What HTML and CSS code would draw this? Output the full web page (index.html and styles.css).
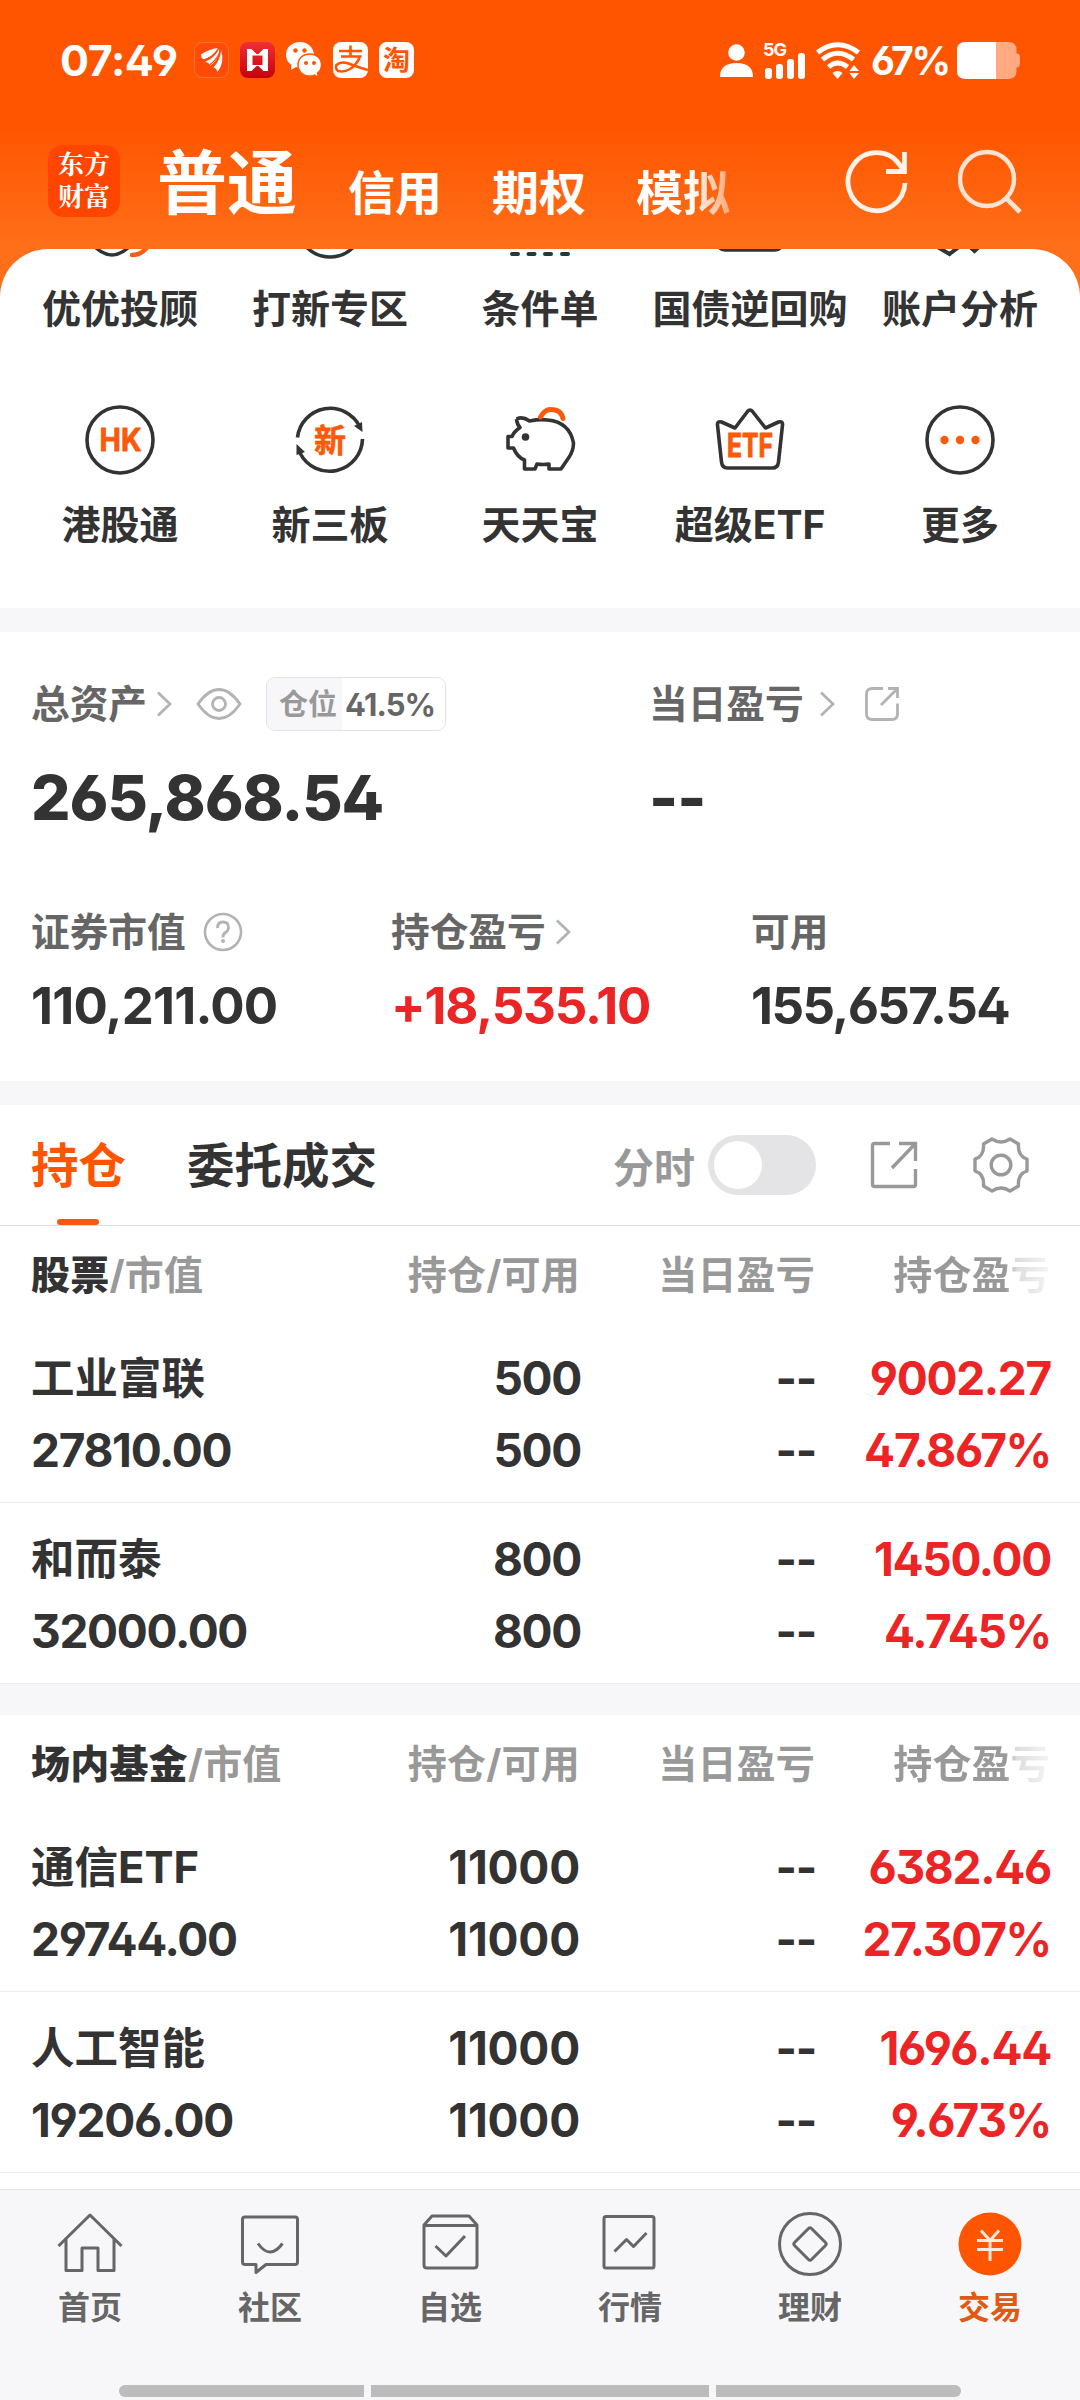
FILE: index.html
```html
<!DOCTYPE html>
<html lang="zh-CN">
<head>
<meta charset="utf-8">
<title>交易</title>
<link rel="stylesheet" href="styles.css">
</head>
<body>
<div class="app">
  <header class="top">
    <div class="status">
      <span class="clock">07:49</span>
      <div class="notif">
        <svg width="35" height="36" viewBox="0 0 35 36"><rect x=".5" y=".5" width="34" height="35" rx="8" fill="#ff4a08" stroke="#ff7433"/><path d="M7 12.500Q15 7 24 6q-3 8-14 11.500Q7 16 7 12.500z" fill="#fff"/><path d="M11 20Q22 15 25 6.500q2 9-9 17.500-1-4-5-4z" fill="#fff"/><path d="M23.500 30q-1-4-4-4.500Q27 17 27 8q4 12-3.500 22z" fill="#fff"/><path d="M9 18.500Q21 14 24.500 6M15 23.500Q25 16 26.500 7" fill="none" stroke="#ff4a08" stroke-width="1.200"/></svg>
        <svg width="35" height="36" viewBox="0 0 35 36"><defs><linearGradient id="r" x2="0" y2="1"><stop stop-color="#ee3038"/><stop offset="1" stop-color="#c8000c"/></linearGradient></defs><rect width="35" height="36" rx="8" fill="url(#r)"/><path d="M7 7h4.500l5 5h2l5-5H28v22h-4.500l-5-5h-2l-5 5H7zM12.500 13.500v9.500h10V13.500z" fill="#fff" fill-rule="evenodd"/></svg>
        <svg width="36" height="36" viewBox="0 0 36 36"><path d="M14 0C6 0 0 5.500 0 13q0 6 5.500 10L5 28l5-3q2 .8 5 .8C22 26 28 20 28 13S22 0 14 0" fill="#fff"/><path d="M24 12c-7 0-12 4.500-12 11s5 11 12 11q3 0 4.500-1l4 3-1-5q4-3 4-8c0-6.500-5-11-11.500-11" fill="#fff" stroke="#ff5500" stroke-width="1.500"/><g fill="#ff5500"><circle cx="9.500" cy="8.500" r="2.200"/><circle cx="18.500" cy="8.500" r="2.200"/><circle cx="20" cy="21" r="2"/><circle cx="28" cy="21" r="2"/></g></svg>
        <svg width="35" height="36" viewBox="0 0 35 36"><rect width="35" height="36" rx="8" fill="#fff"/><path d="M6 9h23M17.500 3.500v11M8 14.500h19q-3 8-10 12.500-6 3.500-12 2-3-2-1.500-6 4-4 12-1.500 10 4 19.500 6.500" fill="none" stroke="#ff5500" stroke-width="2.600"/></svg>
        <svg width="35" height="36" viewBox="0 0 35 36"><rect width="35" height="36" rx="8" fill="#fff"/><text x="17.500" y="28" class="cjk" font-size="27" text-anchor="middle" fill="#ff5500">淘</text></svg>
      </div>
      <div class="sys">
        <svg width="33" height="36" viewBox="0 0 33 36"><circle cx="16.500" cy="10.500" r="8.300" fill="#fff"/><path d="M0 35q0-14 16.500-14T33 35z" fill="#fff"/></svg>
        <svg class="signal" width="43" height="43" viewBox="0 -6 43 43"><text x="0" y="14" font-size="18" font-weight="700" textLength="24" fill="#fff">5G</text><g fill="#fff"><rect x="2" y="26" width="7" height="11" rx="3"/><rect x="13" y="22" width="7" height="15" rx="3"/><rect x="24" y="17" width="7" height="20" rx="3"/><rect x="35" y="11" width="7" height="26" rx="3"/></g></svg>
        <svg width="44" height="37" viewBox="0 0 44 37"><g fill="none" stroke="#fff" stroke-width="5"><path d="M1.500 10.500Q21.500-5 42.500 10.500M6.500 17.500Q21.500 5 37.500 17.500M12.500 25Q21.500 17 31.500 25"/></g><path d="M16.500 31q5-4 10 0l-5 6z M38 23l5 6H33.500zM38 37l5-6H33.500z" fill="#fff"/></svg>
        <span class="pct">67%</span>
        <svg width="64" height="37" viewBox="0 0 64 37"><path d="M39 0h12q8.500 0 8.500 8v3.500q3.500 0 3.500 4v6q0 4-3.500 4V29q0 8-8.500 8H39z" fill="#ffaa80"/><path d="M39 0H9Q0 0 0 8v21q0 8 9 8h30z" fill="#fff"/></svg>
      </div>
    </div>
    <nav class="accounts">
      <div class="logo"><span>东方</span><span>财富</span></div>
      <span class="acc on">普通</span>
      <span class="acc">信用</span>
      <span class="acc">期权</span>
      <span class="acc fade">模拟</span>
      <div class="actions">
        <svg width="64" height="66" viewBox="0 0 64 66"><path d="M60 34a28.500 29 0 1 1-5.500-18.500L59 22M59.500 3v19.500H41" fill="none" stroke="#fff2e8" stroke-width="4.800"/></svg>
        <svg width="64" height="66" viewBox="0 0 64 66"><circle cx="29" cy="30" r="27" fill="none" stroke="#ffe3d2" stroke-width="4.500"/><path d="M48 49l14 14" stroke="#ffe3d2" stroke-width="4.800"/></svg>
      </div>
    </nav>
  </header>

  <section class="shortcuts">
    <div class="cell"><svg class="peek" viewBox="84 249 72 12"><path d="M94 246q18 18 36 0" fill="none" stroke="#333" stroke-width="3.500"/><path d="M132 255q10 0 16-9" fill="none" stroke="#f26010" stroke-width="4.500" stroke-linecap="round"/></svg><b>优优投顾</b></div>
    <div class="cell"><svg class="peek" viewBox="294 249 72 12"><circle cx="330" cy="224" r="33" fill="none" stroke="#333" stroke-width="3.500"/></svg><b>打新专区</b></div>
    <div class="cell"><svg class="peek" viewBox="504 249 72 12"><path d="M512 254h6M528.500 254h6M545 254h6M562 254h6" stroke="#333" stroke-width="4" stroke-linecap="round"/></svg><b>条件单</b></div>
    <div class="cell"><svg class="peek" viewBox="714 249 72 12"><rect x="717" y="200" width="66" height="50" rx="8" fill="none" stroke="#333" stroke-width="3.500"/></svg><b>国债逆回购</b></div>
    <div class="cell"><svg class="peek" viewBox="924 249 72 12"><path d="M934 245l15.500 9 12-9M968 245l6.500 6 6.500-6" fill="none" stroke="#333" stroke-width="4"/></svg><b>账户分析</b></div>
    <div class="cell"><svg class="ico" viewBox="0 0 72 72"><circle cx="36" cy="36" r="33" fill="none" stroke="#333" stroke-width="3.600"/><text x="15.500" y="47" font-size="31" font-weight="700" textLength="42" lengthAdjust="spacingAndGlyphs" fill="#fa5a0a" stroke="#fa5a0a" stroke-width=".8" stroke-linejoin="round">HK</text></svg><b>港股通</b></div>
    <div class="cell"><svg class="ico" viewBox="0 0 72 72"><path d="M3.500 33.500A33 33 0 0 1 66 23M68.500 35A33 33 0 0 1 6 49" fill="none" stroke="#333" stroke-width="3.600"/><path d="M60 22l8-4 .5 10zM2.500 51V40l8.500 8z" fill="#333"/><text x="36" y="47.500" class="cjk" font-size="32" text-anchor="middle" fill="#fa5a0a" stroke="#fa5a0a" stroke-width=".6">新</text></svg><b>新三板</b></div>
    <div class="cell"><svg class="ico" viewBox="0 0 72 72"><path d="M12.500 15q6-3 13 2 10-2 18-1 22 2 26 23 0 8-5 15l-7.500 11H45v-5q-6 1-12 0l-2 5H20.500v-9Q13 53 9.500 44H4V32.500h4q2-5 8-9-3-3-3.500-8.500" fill="none" stroke="#333" stroke-width="3.600" stroke-linejoin="round"/><circle cx="21.500" cy="33" r="3.800" fill="#333"/><path d="M36.500 13Q41 5 47 5.500q10 0 12 9" fill="none" stroke="#fa5a0a" stroke-width="5" stroke-linecap="round"/></svg><b>天天宝</b></div>
    <div class="cell"><svg class="ico" viewBox="0 0 72 72"><path d="M21 24L33.500 7.500q2.500-3 5 0L51.500 24l13-6q4.500-1 4 3L64.500 58q-.7 6-6 6h-45q-5.300 0-6-6L3.500 21q-.5-4 4-3z" fill="none" stroke="#333" stroke-width="3.600" stroke-linejoin="round"/><text x="13" y="53" font-size="32" font-weight="700" textLength="46" lengthAdjust="spacingAndGlyphs" fill="#fa5a0a" stroke="#fa5a0a" stroke-width="1" stroke-linejoin="round">ETF</text></svg><b>超级ETF</b></div>
    <div class="cell"><svg class="ico" viewBox="0 0 72 72"><circle cx="36" cy="36" r="33" fill="none" stroke="#333" stroke-width="3.600"/><g fill="#fa5a0a"><circle cx="20.500" cy="36" r="4.200"/><circle cx="36" cy="36" r="4.200"/><circle cx="51.500" cy="36" r="4.200"/></g></svg><b>更多</b></div>
  </section>

  <section class="assets">
    <div class="two">
      <div>
        <div class="lab">总资产<svg class="chev c1" viewBox="0 0 16 26"><path d="M2 1.500L14 13 2 24.500"/></svg><svg class="eye" width="46" height="32" viewBox="0 0 46 32"><g fill="none" stroke="#b3b3b3" stroke-width="2.800"><path d="M2 16Q12 1.500 23 1.500T44 16Q34 30.500 23 30.500T2 16z"/><circle cx="23" cy="16" r="6.500"/></g></svg><span class="badge"><i>仓位</i><em>41.5%</em></span></div>
        <div class="big">265,868.54</div>
      </div>
      <div>
        <div class="lab">当日盈亏<svg class="chev c2" viewBox="0 0 16 26"><path d="M2 1.500L14 13 2 24.500"/></svg><svg class="share" width="34" height="34" viewBox="0 0 34 34"><path d="M18 1.500H7Q1.500 1.500 1.500 7v20q0 5.500 5.500 5.500h20q5.500 0 5.500-5.500V16.500M23 1.500h9.500V11M32.500 1.500L16 18" fill="none" stroke="#b3b3b3" stroke-width="2.800"/></svg></div>
        <div class="big dash">--</div>
      </div>
    </div>
    <div class="three">
      <div><div class="lab">证券市值<svg class="help" width="40" height="40" viewBox="0 0 40 40"><circle cx="20" cy="20" r="18" fill="none" stroke="#b3b3b3" stroke-width="2.600"/><path d="M14.500 16q0-6 5.500-6t5.500 5.500q0 3-3 5t-2.500 5" fill="none" stroke="#b3b3b3" stroke-width="2.800"/><circle cx="20" cy="29" r="2" fill="#b3b3b3"/></svg></div><div class="num n1">110,211.00</div></div>
      <div><div class="lab">持仓盈亏<svg class="chev c3" viewBox="0 0 16 26"><path d="M2 1.500L14 13 2 24.500"/></svg></div><div class="num red">+18,535.10</div></div>
      <div><div class="lab">可用</div><div class="num n3">155,657.54</div></div>
    </div>
  </section>

  <section class="holdings">
    <div class="tabs">
      <span class="tab on">持仓</span>
      <span class="tab">委托成交</span>
      <span class="mode">分时</span>
      <span class="toggle"></span>
      <svg class="t-share" width="48" height="48" viewBox="0 0 48 48"><path d="M20 2.500H4.500Q2.500 2.500 2.500 4.500v39q0 2 2 2h39q2 0 2-2V28M29 2.500h16.500V20M45 3L22 27" fill="none" stroke="#999" stroke-width="3.400"/></svg>
      <svg width="56" height="56" viewBox="0 0 56 56"><g fill="none" stroke="#999" stroke-width="3.400"><path d="M19 2q9 6 18 0l8.500 5q-1 12 8.500 15v12q-9.500 3-8.500 15L37 54q-9-6-18 0l-8.500-5Q11.500 37 2 34V22Q11.500 19 10.500 7z" stroke-linejoin="round"/><circle cx="28" cy="28" r="9.800"/></g></svg>
    </div>

    <div class="group">
      <div class="row head"><span><b>股票</b>/市值</span><span>持仓/可用</span><span>当日盈亏</span><span class="cut">持仓盈亏</span></div>
      <div class="row"><span class="name">工业富联</span><span>500</span><span>--</span><span class="red">9002.27</span><span>27810.00</span><span>500</span><span>--</span><span class="red">47.867%</span></div>
      <div class="row"><span class="name">和而泰</span><span>800</span><span>--</span><span class="red">1450.00</span><span>32000.00</span><span>800</span><span>--</span><span class="red">4.745%</span></div>
    </div>
    <div class="group">
      <div class="row head"><span><b>场内基金</b>/市值</span><span>持仓/可用</span><span>当日盈亏</span><span class="cut">持仓盈亏</span></div>
      <div class="row"><span class="name">通信ETF</span><span class="loose">11000</span><span>--</span><span class="red">6382.46</span><span>29744.00</span><span class="loose">11000</span><span>--</span><span class="red">27.307%</span></div>
      <div class="row"><span class="name">人工智能</span><span class="loose">11000</span><span>--</span><span class="red">1696.44</span><span>19206.00</span><span class="loose">11000</span><span>--</span><span class="red">9.673%</span></div>
    </div>
  </section>

  <footer class="bottom">
    <nav class="menu">
      <div class="item"><svg viewBox="0 0 68 68"><path d="M2.500 36L34 5l31.500 31M10 29v31.500h16V38h16v22.500h16V29"/></svg><span>首页</span></div>
      <div class="item"><svg viewBox="0 0 68 68"><path d="M9 7h50q2.500 0 2.500 2.500v42.500q0 2.500-2.500 2.500H30l-10 8v-8H9q-2.500 0-2.500-2.500V9.500Q6.500 7 9 7zM22 33.500q12 17 24.500 0"/></svg><span>社区</span></div>
      <div class="item"><svg viewBox="0 0 68 68"><path d="M8 15l8-9h37l8 9v40q0 3-3 3H11q-3 0-3-3zM8 15.500h53M19.500 36l10.500 10 19-20"/></svg><span>自选</span></div>
      <div class="item"><svg viewBox="0 0 68 68"><path d="M10 6.500h46q2 0 2 2V56q0 2-2 2H10q-2 0-2-2V8.500q0-2 2-2zM18.500 41.500l12-12 7 7 13-13.500"/></svg><span>行情</span></div>
      <div class="item"><svg viewBox="0 0 68 68"><circle cx="34" cy="34" r="30.500"/><path d="M35.500 18.500l14 14q1.500 1.500 0 3l-14 14q-1.500 1.500-3 0l-14-14q-1.500-1.500 0-3l14-14q1.500-1.500 3 0"/></svg><span>理财</span></div>
      <div class="item on"><svg viewBox="0 0 68 68"><circle cx="34" cy="34" r="31.500" fill="#ff5500" stroke="none"/><path d="M25 20.500l9 10 9-10M34 30v21M21 30.500h26M21 39.500h26" stroke="#ffeadd"/></svg><span>交易</span></div>
    </nav>
    <div class="bar"><i class="s"></i><i class="m"></i><i class="s"></i></div>
  </footer>
</div>
</body>
</html>
```
FILE: styles.css
```css
* { box-sizing: border-box; }
body {
  margin: 0;
  font-family: Inter, "Noto Sans CJK SC", sans-serif;
  font-feature-settings: "ss01", "cv03", "cv04";
  color: #333;
  background: #fff;
}
svg { display: block; flex: none; }
.cjk { font-family: Inter, "Noto Sans CJK SC", sans-serif; font-weight: 700; }
.app { width: 1080px; height: 2400px; overflow: hidden; display: flex; flex-direction: column; background: #f7f7fa; }
.red { color: #eb2525; }

.top { height: 297px; flex: none; background: linear-gradient(#ff5500 125px, #ff6f19 249px); color: #fff; }
.status { height: 118px; padding: 2px 59px 0 60px; display: flex; align-items: center; }
.clock { width: 134px; font-size: 43px; font-weight: 700; letter-spacing: -.4px; }
.notif { display: flex; gap: 11px; }
.sys { margin-left: auto; display: flex; align-items: center; }
.sys svg + svg { margin-left: 10px; }
.sys .signal { margin-top: -6px; }
.pct { font-size: 39px; font-weight: 700; width: 86px; margin-left: 11px; letter-spacing: -2.300px; }
.accounts { display: flex; height: 131px; padding: 0 58px 0 48px; align-items: flex-start; white-space: nowrap; }
.logo { margin: 27px 38px 0 0; width: 72px; height: 72px; border-radius: 15px; background: #ff4500; font-family: Inter, "Noto Serif CJK SC", "Noto Sans CJK SC", serif; font-weight: 700; font-size: 26px; line-height: 32px; display: flex; flex-direction: column; align-items: center; justify-content: center; }
.acc { font-size: 47px; font-weight: 700; line-height: 60px; margin: 45px 50px 0 0; }
.acc.on { font-size: 70px; line-height: 80px; margin: 26px 51px 0 -1px; }
.fade { margin-right: 0; background: linear-gradient(90deg, #fff 58%, #ffa675 100%); -webkit-background-clip: text; background-clip: text; color: transparent; }
.actions { margin: 31px 0 0 auto; display: flex; gap: 49px; }

.shortcuts { flex: none; height: 359px; margin-top: -48px; padding: 0 15px; background: #fff; border-radius: 48px 48px 0 0; overflow: hidden; display: grid; grid-template-columns: repeat(5, 1fr); grid-template-rows: 155px 204px; }
.cell { display: flex; flex-direction: column; align-items: center; white-space: nowrap; font-size: 39px; line-height: 50px; }
.peek { width: 72px; height: 12px; margin-bottom: 23px; }
.ico { width: 72px; height: 72px; margin-bottom: 24px; }

.assets { flex: none; height: 449px; margin-top: 24px; padding: 45px 0 0 31px; background: #fff; }
.lab { height: 54px; display: flex; align-items: center; font-size: 38.700px; line-height: 54px; font-weight: 700; color: #666; white-space: nowrap; }
.two { display: grid; grid-template-columns: 618px 1fr; }
.three { display: grid; grid-template-columns: repeat(3, 360px); margin-top: 67px; }
.chev { width: 16px; height: 26px; fill: none; stroke: #b3b3b3; stroke-width: 2.800; }
.c1 { margin-left: 9px; }
.c2 { margin-left: 15px; }
.c3 { margin-left: 9px; }
.eye { margin-left: 24px; }
.share { margin-left: 30px; }
.help { margin-left: 17px; }
.badge { display: flex; margin-left: 24px; width: 180px; height: 54px; border: 1px solid #e2e2e6; border-radius: 9px; overflow: hidden; font-size: 29px; line-height: 53px; }
.badge i { width: 75px; padding-left: 12px; background: #f7f7fa; color: #999; font-style: normal; }
.badge em { font-style: normal; font-size: 31px; padding-left: 3px; letter-spacing: -.9px; }
.big { font-size: 62px; line-height: 80px; font-weight: 800; margin-top: 27px; height: 80px; letter-spacing: -1px; }
.num { font-size: 51px; line-height: 60px; font-weight: 700; margin-top: 17px; letter-spacing: -1.200px; }
.n1 { letter-spacing: -.800px; }
.n3 { letter-spacing: -1.600px; }

.holdings { flex: none; margin-top: 24px; height: 1084px; overflow: hidden; display: flex; flex-direction: column; }
.tabs { flex: none; display: flex; align-items: center; height: 121px; padding: 0 51px 0 31px; background: #fff; border-bottom: 1px solid #dedede; }
.tab { position: relative; font-size: 47.500px; font-weight: 700; line-height: 121px; margin-right: 61px; white-space: nowrap; }
.tab.on { color: #ff5500; }
.tab.on::after { content: ""; position: absolute; left: 26px; bottom: 1px; width: 42px; height: 6px; border-radius: 3px; background: #f55a0c; }
.mode { margin-left: auto; font-size: 41px; font-weight: 700; color: #999; }
.toggle { margin: 0 54px 0 13px; width: 108px; height: 60px; padding: 6px; border-radius: 30px; background: #e4e4e6; }
.toggle::before { content: ""; display: block; width: 48px; height: 48px; border-radius: 50%; background: #fff; }
.t-share { margin-right: 55px; }
.group { background: #fff; }
.group + .group { margin-top: 31px; flex: 1; }
.row { display: grid; grid-template-columns: 250px 299px 235px 235px; grid-template-rows: 72px 72px; height: 181px; padding: 20px 30px 0 31px; border-bottom: 1px solid #ececec; font-size: 46px; font-weight: 650; line-height: 72px; white-space: nowrap; }
.row span { text-align: right; letter-spacing: -1.300px; margin-right: -1px; }
.row .loose { letter-spacing: -.2px; margin-right: 0; }
.row span:nth-child(4n+1) { text-align: left; }
.row .name { font-size: 43.500px; letter-spacing: 0; font-weight: 700; }
.row.head { height: 96px; padding-top: 1px; border: 0; grid-template-rows: 96px; font-size: 39px; font-weight: 700; line-height: 96px; color: #999; }
.row.head span { letter-spacing: .2px; margin-right: 0; }
.head b { color: #333; }
.row .cut { background: linear-gradient(90deg, #999 81%, #dedede 86%, #f4f4f4 100%); -webkit-background-clip: text; background-clip: text; color: transparent; }

.bottom { flex: 1; border-top: 1px solid #e2e2e4; background: #f7f7fa; }
.menu { display: grid; grid-template-columns: repeat(6, 1fr); height: 195px; padding-top: 20px; }
.item { display: flex; flex-direction: column; align-items: center; font-size: 32px; line-height: 42px; font-weight: 700; color: #666; }
.item svg { width: 68px; height: 68px; margin-bottom: 9px; fill: none; stroke: #666; stroke-width: 3; stroke-linejoin: round; }
.item.on { color: #e05a12; }
.bar { display: flex; justify-content: center; gap: 7px; }
.bar i { height: 12px; background: #bcbcbc; }
.bar .s { width: 245px; border-radius: 6px 0 0 6px; }
.bar .m { width: 338px; }
.bar .m + .s { border-radius: 0 6px 6px 0; }
```
